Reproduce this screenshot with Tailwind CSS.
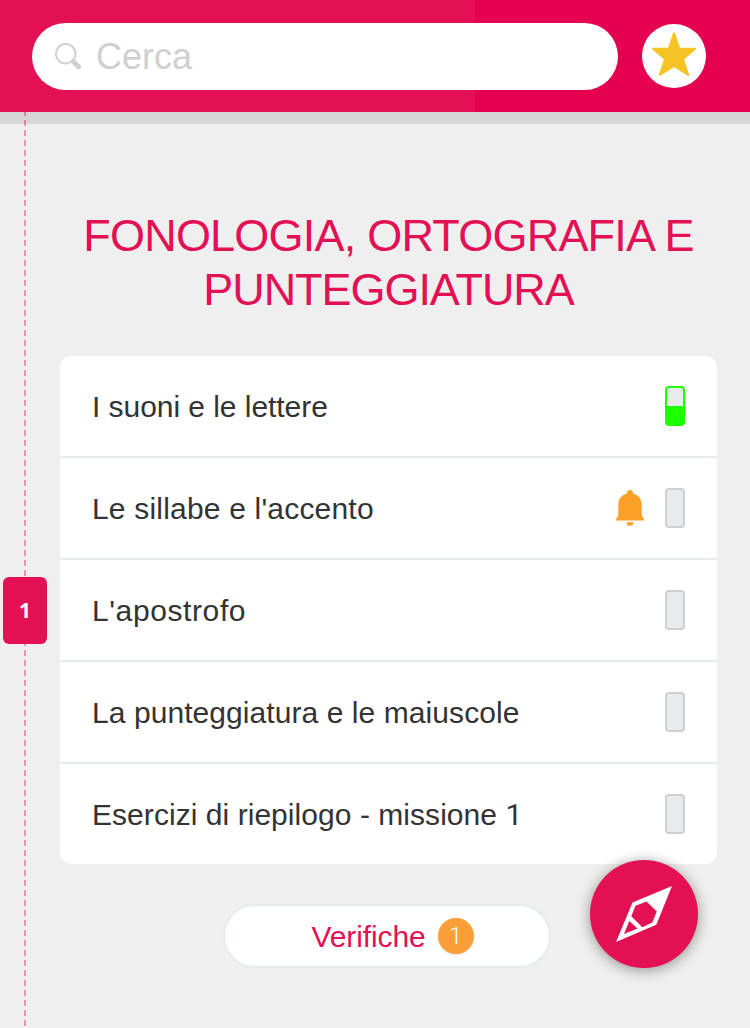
<!DOCTYPE html>
<html lang="it">
<head>
<meta charset="utf-8">
<title>Fonologia, ortografia e punteggiatura</title>
<script src="https://cdn.jsdelivr.net/npm/@tailwindcss/browser@4"></script>
</head>
<body class="relative flex h-[1028px] w-[750px] flex-col overflow-hidden bg-[#efefef] font-['Liberation_Sans',sans-serif] text-[30px] text-[#333333]">
  <!-- dashed path running behind the unit number -->
  <div class="absolute top-[110px] left-6 h-[918px] w-0.5 bg-[repeating-linear-gradient(to_bottom,#eb94b1_0px,#eb94b1_6px,transparent_6px,transparent_10px)]"></div>

  <header class="relative flex h-28 shrink-0 items-center gap-6 bg-[linear-gradient(to_right,#e31053_475px,#e60050_475px)] pl-8">
    <div class="mt-px flex h-[67px] w-[586px] items-center rounded-full bg-white pl-[23px] text-[#cfcfcf]">
      <svg class="h-[27px] w-[27px]" viewBox="0 0 27 27" fill="none" stroke="currentColor">
        <circle cx="10.7" cy="10.7" r="9.8" stroke-width="1.9"/>
        <path d="M16.500 16.800l3 3" stroke-width="3.500"/>
        <path d="M19 19.300l4.600 4.500" stroke-width="5" stroke-linecap="round"/>
      </svg>
      <span class="ml-[14px] pt-px text-[36px] leading-none">Cerca</span>
    </div>
    <div class="flex h-16 w-16 items-center justify-center rounded-full bg-white">
      <svg class="-mt-1 h-[46px] w-[46px]" viewBox="0 0 46 46" fill="#f6c324" stroke="#f6c324" stroke-width="2" stroke-linejoin="round">
        <path d="M23 2.200L28.300 17.700H44L32 28L37.200 44L23 35L8.800 44L14 28L2 17.700H17.700Z"/>
      </svg>
    </div>
  </header>
  <div class="relative h-3 shrink-0 bg-black/10"></div>

  <main class="flex items-start">
    <aside class="relative mt-[453px] ml-[3px] flex h-[67px] w-11 shrink-0 items-center justify-center rounded-md bg-[#e31053] font-['Open_Sans',sans-serif] text-[21px] font-bold text-white">1</aside>

    <section class="ml-[13px] flex w-[657px] flex-col items-center pt-[85px]">
      <h1 class="text-center text-[45px] leading-[54px] whitespace-nowrap text-[#e31053]">
        <span class="block tracking-[-0.78px]">FONOLOGIA, ORTOGRAFIA E</span>
        <span class="block tracking-[-1.05px]">PUNTEGGIATURA</span>
      </h1>

      <ul class="mt-[39px] w-full divide-y-2 divide-[#e6ebeb] overflow-hidden rounded-xl bg-white">
        <li class="flex h-[102px] items-center justify-between px-8">
          <span class="tracking-[-0.05px]">I suoni e le lettere</span>
          <span class="flex h-10 w-5 flex-col justify-end rounded border-2 border-[#1eff00] bg-[#e6ebeb]"><i class="block h-[18px] bg-[#1eff00]"></i></span>
        </li>
        <li class="flex h-[102px] items-center px-8">
          <span class="flex-1 tracking-[0.19px]">Le sillabe e l'accento</span>
          <svg class="mr-5 h-9 w-[30px]" viewBox="0 0 30 36" fill="#fc9f26">
            <path d="M15 0a3 3 0 0 1 3 3.500C23.500 5 26.700 9 26.700 15V23.500C26.700 26.500 28 27.500 29.500 30.600H.5C2 27.500 3.300 26.500 3.300 23.500V15C3.300 9 6.500 5 12 3.500A3 3 0 0 1 15 0ZM11.500 32.300h7a3.500 3.500 0 0 1-7 0Z"/>
          </svg>
          <span class="h-10 w-5 rounded border-2 border-[#cfcfcf] bg-[#e6ebeb]"></span>
        </li>
        <li class="flex h-[102px] items-center justify-between px-8">
          <span class="tracking-[0.6px]">L'apostrofo</span>
          <span class="h-10 w-5 rounded border-2 border-[#cfcfcf] bg-[#e6ebeb]"></span>
        </li>
        <li class="flex h-[102px] items-center justify-between px-8">
          <span class="tracking-[0.07px]">La punteggiatura e le maiuscole</span>
          <span class="h-10 w-5 rounded border-2 border-[#cfcfcf] bg-[#e6ebeb]"></span>
        </li>
        <li class="flex h-[100px] items-center justify-between px-8">
          <span class="tracking-[0.05px]">Esercizi di riepilogo - missione <span class="font-['Roboto',sans-serif] leading-none">1</span></span>
          <span class="h-10 w-5 rounded border-2 border-[#cfcfcf] bg-[#e6ebeb]"></span>
        </li>
      </ul>

      <div class="mt-10 mr-[3px] flex h-16 w-[328px] items-center justify-center gap-3 rounded-full border-2 border-[#e6ebeb] bg-white pl-[11px] text-[#e31053]">
        <span class="tracking-[-0.1px]">Verifiche</span>
        <span class="flex h-9 w-9 items-center justify-center rounded-full bg-[#fa9f38] font-['Roboto',sans-serif] text-[24px] font-light text-white shadow-sm">1</span>
      </div>
    </section>
  </main>

  <!-- floating compass button -->
  <div class="absolute top-[860px] left-[590px] h-[108px] w-[108px] rounded-full bg-[#e31053] shadow-[0_2px_14px_rgba(0,0,0,0.4)]">
    <svg class="h-full w-full" viewBox="0 0 108 108">
      <path fill="#fff" fill-rule="evenodd" d="M82 26L66.300 64.800L26 82L42.500 42.500ZM56.500 41.500L45.500 45.800L41.300 56.200L52.300 67.300L62.300 62.600L66.800 51.500ZM39.300 61L34 74L47.500 68.500Z"/>
    </svg>
  </div>
</body>
</html>
